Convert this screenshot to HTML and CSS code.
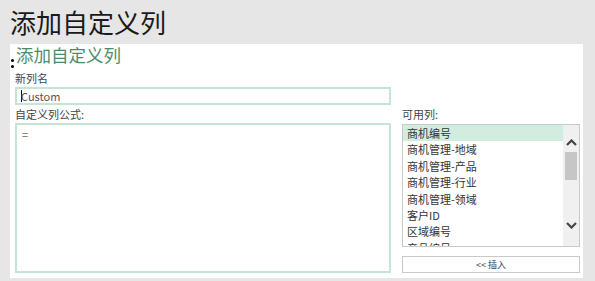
FILE: index.html
```
<!DOCTYPE html>
<html>
<head>
  <link rel="stylesheet" href="styles.css">
</head>
<body>
  <h1 class="page-title">添加自定义列</h1>

  <div class="panel">
    <span class="dots"><i></i><i></i></span>
    <div class="panel-title">添加自定义列</div>

    <div class="label label-name">新列名</div>
    <div class="name-input"><span class="caret"></span>Custom</div>

    <div class="columns">
      <div class="left-col">
        <div class="label">自定义列公式:</div>
        <div class="formula">=</div>
      </div>

      <div class="right-col">
        <div class="label">可用列:</div>
        <div class="list-box">
          <div class="list-items">
            <div class="list-item selected">商机编号</div>
            <div class="list-item">商机管理-地域</div>
            <div class="list-item">商机管理-产品</div>
            <div class="list-item">商机管理-行业</div>
            <div class="list-item">商机管理-领域</div>
            <div class="list-item">客户ID</div>
            <div class="list-item">区域编号</div>
            <div class="list-item">产品编号</div>
          </div>
          <div class="scrollbar">
            <div class="arrow arrow-up">
              <svg width="11" height="7" viewBox="0 0 11 7"><path d="M1 6 L5.5 1.5 L10 6" fill="none" stroke="#444" stroke-width="2.2"/></svg>
            </div>
            <div class="thumb"></div>
            <div class="track"></div>
            <div class="arrow arrow-down">
              <svg width="11" height="7" viewBox="0 0 11 7"><path d="M1 1 L5.5 5.5 L10 1" fill="none" stroke="#444" stroke-width="2.2"/></svg>
            </div>
          </div>
        </div>
        <div class="insert-btn">&lt;&lt; 插入</div>
      </div>
    </div>
  </div>
</body>
</html>
```

FILE: styles.css
```
* {
  margin: 0;
  padding: 0;
  box-sizing: border-box;
  font-family: "Noto Sans CJK SC", "Liberation Sans", sans-serif;
}

body {
  background: #e6e6e6;
  width: 595px;
  height: 281px;
  overflow: hidden;
}

.page-title {
  font-size: 26px;
  font-weight: 400;
  line-height: 44px;
  height: 44px;
  padding-left: 10px;
  color: #1a1a1a;
}

.panel {
  position: relative;
  margin-left: 10px;
  width: 573px;
  height: 234px;
  background: #fff;
  padding: 0 3px 0 5px;
}

.dots {
  position: absolute;
  left: 1px;
  top: 15px;
  display: flex;
  flex-direction: column;
  gap: 3px;
}

.dots i {
  display: block;
  width: 3px;
  height: 3px;
  border-radius: 50%;
  background: #000;
}

.panel-title {
  font-size: 17.5px;
  line-height: 22px;
  height: 22px;
  padding-left: 1px;
  color: #4a8d6d;
}

.label {
  font-size: 11px;
  line-height: 18px;
  height: 18px;
  color: #444;
}

.label-name {
  margin-top: 3px;
}

.name-input {
  width: 376px;
  height: 18px;
  border: 2px solid #c4e5d4;
  font-size: 11px;
  line-height: 14px;
  color: #555;
  padding-left: 4px;
  display: flex;
  align-items: center;
}

.caret {
  display: inline-block;
  width: 1px;
  height: 12px;
  background: #111;
  margin-right: -1px;
}

.columns {
  display: flex;
  gap: 11px;
}

.left-col {
  width: 376px;
}

.formula {
  height: 150px;
  border: 2px solid #c4e5d4;
  font-size: 11px;
  color: #666;
  padding: 2px 5px;
  line-height: 14px;
}

.right-col {
  width: 178px;
}

.list-box {
  margin-top: 1px;
  height: 123px;
  border: 1px solid #c9c9c9;
  display: flex;
  overflow: hidden;
}

.list-items {
  flex: 1;
  overflow: hidden;
}

.list-item {
  height: 16.4px;
  line-height: 16.4px;
  font-size: 11px;
  color: #333;
  padding-left: 4px;
  white-space: nowrap;
}

.list-item.selected {
  background: #d3ece0;
}

.scrollbar {
  width: 16px;
  background: #f0f0f0;
  display: flex;
  flex-direction: column;
  align-items: center;
}

.arrow {
  height: 27px;
  display: flex;
  justify-content: center;
}

.arrow-up {
  align-items: flex-end;
  padding-bottom: 6px;
}

.arrow-down {
  align-items: flex-start;
  padding-top: 3px;
}

.thumb {
  width: 12px;
  height: 28px;
  background: #c6c6c6;
}

.track {
  flex: 1;
}

.insert-btn {
  margin-top: 9px;
  height: 17px;
  border: 1px solid #c9c9c9;
  font-size: 9px;
  line-height: 15px;
  text-align: center;
  color: #444;
}
```
